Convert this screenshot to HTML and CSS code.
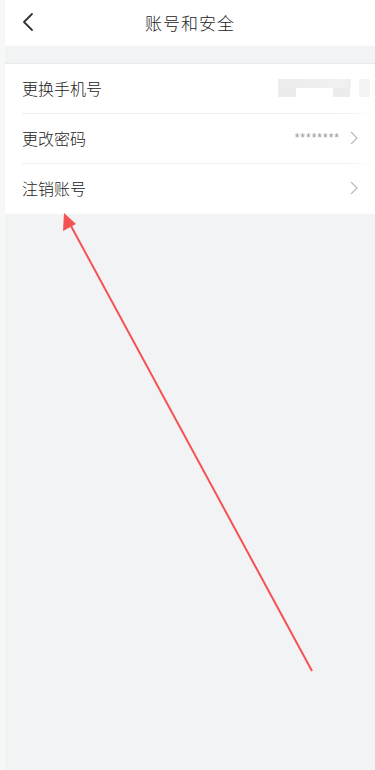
FILE: index.html
```html
<!DOCTYPE html>
<html lang="zh-CN">
<head>
    <meta charset="UTF-8">
    <meta name="viewport" content="width=device-width, initial-scale=1.0">
    <title>账号和安全</title>
    <link rel="stylesheet" href="styles.css">
</head>
<body>
    <div class="page">
        <div class="edge"></div>
        <div class="main">
            <!-- header -->
            <div class="header">
                <svg class="back" width="12" height="20" viewBox="0 0 12 20">
                    <path d="M10 2 L2 10 L10 18" fill="none" stroke="#333" stroke-width="1.8" stroke-linecap="round" stroke-linejoin="round"/>
                </svg>
                <div class="title">账号和安全</div>
            </div>
            <div class="gap"></div>

            <!-- list -->
            <div class="list">
                <div class="row">
                    <span class="label">更换手机号</span>
                    <span class="mosaic">
                        <span class="m-top"></span>
                        <span class="m-bottom"></span>
                    </span>
                </div>
                <div class="row">
                    <span class="label">更改密码</span>
                    <span class="value">********</span>
                    <svg class="arrow-right" width="8" height="14" viewBox="0 0 8 14">
                        <path d="M1 1 L7 7 L1 13" fill="none" stroke="#bbb" stroke-width="1.2"/>
                    </svg>
                </div>
                <div class="row last">
                    <span class="label">注销账号</span>
                    <span class="value"></span>
                    <svg class="arrow-right" width="8" height="14" viewBox="0 0 8 14">
                        <path d="M1 1 L7 7 L1 13" fill="none" stroke="#bbb" stroke-width="1.2"/>
                    </svg>
                </div>
            </div>
        </div>
    </div>

    <!-- annotation arrow -->
    <svg class="annotation" width="375" height="770" viewBox="0 0 375 770">
        <path d="M312 671 L71 226" fill="none" stroke="#f55353" stroke-width="2"/>
        <path d="M64 213 L63 231 L76 224 Z" fill="#f55353"/>
    </svg>
</body>
</html>
```

FILE: styles.css
```css
body {
    margin: 0;
    padding: 0;
    font-family: "Noto Sans CJK SC", "Noto Sans", sans-serif;
    color: #222;
    background: #f2f3f5;
}
.page {
    display: flex;
    min-height: 770px;
}
.edge {
    width: 5px;
    background: #f7f7f7;
}
.main {
    flex: 1;
    background: #f2f3f5;
}
.header {
    height: 46px;
    background: #fff;
    display: flex;
    align-items: center;
    justify-content: center;
    position: relative;
}
.back {
    position: absolute;
    left: 17px;
    top: 12px;
}
.title {
    font-size: 17px;
    font-weight: 300;
    color: #222;
    letter-spacing: 1px;
    padding-bottom: 2px;
}
.gap {
    height: 17px;
    border-bottom: 1px solid #e8e9eb;
}
.list {
    background: #fff;
}
.row {
    height: 50px;
    margin-left: 17px;
    padding-right: 17px;
    padding-bottom: 2px;
    display: flex;
    align-items: center;
    border-bottom: 1px solid #f0f0f0;
    box-sizing: border-box;
    border-image: linear-gradient(to right, #eee 0%, #eee 90%, #fff 100%) 1;
}
.row.last {
    border-bottom: none;
}
.label {
    font-size: 16px;
    font-weight: 300;
    flex: 1;
}
.value {
    font-family: "Liberation Sans", sans-serif;
    font-size: 12px;
    color: #999;
    margin-right: 10px;
    letter-spacing: 1px;
}
.arrow-right {
    display: block;
}
.mosaic {
    display: flex;
    flex-direction: column;
    width: 92px;
    height: 18px;
    margin-right: -12px;
}
.m-top {
    height: 9px;
    background: linear-gradient(to right, #ececec 0, #eeeeee 40%, #f2f2f2 70%, #ececec 78%, #fff 80%, #fff 88%, #f4f4f4 88%);
}
.m-bottom {
    height: 9px;
    background: linear-gradient(to right, #ececec 0, #ececec 20%, #fff 20%, #fff 60%, #ececec 60%, #ececec 78%, #fff 78%, #fff 88%, #f4f4f4 88%);
}
.annotation {
    position: absolute;
    left: 0;
    top: 0;
    pointer-events: none;
}
```
